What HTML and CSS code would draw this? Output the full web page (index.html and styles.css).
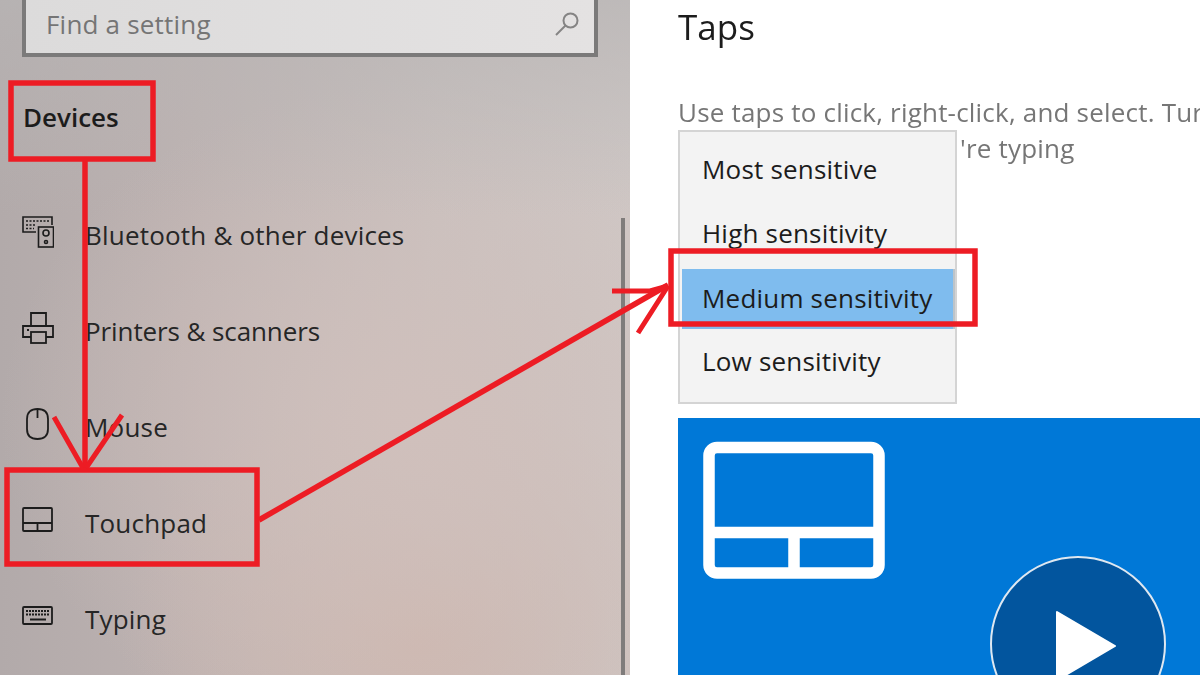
FILE: index.html
```html
<!DOCTYPE html>
<html lang="en">
<head>
  <meta charset="UTF-8">
  <meta name="viewport" content="width=device-width, initial-scale=1">
  <title>Settings - Touchpad</title>
  <link rel="stylesheet" href="styles.css">
</head>
<body>

  <div class="window">
    <aside class="sidebar">
      <div class="search">
        <span>Find a setting</span>
        <svg class="search-icon" width="24" height="24" viewBox="0 0 24 24" fill="none" stroke="#858484" stroke-width="2">
          <circle cx="15.5" cy="8.5" r="7"/>
          <path d="M10.5 13.5 L1 23"/>
        </svg>
      </div>

      <h3 class="group">Devices</h3>

      <nav class="nav">
        <a href="#">
          <svg width="32" height="32" viewBox="0 0 32 32" fill="none" stroke="#1c1c1c" stroke-width="1.6">
            <path d="M14 16 H1 V1 H30 V9"/>
            <rect x="16.5" y="11" width="15" height="20"/>
            <circle cx="24" cy="17" r="3"/>
            <circle cx="24" cy="26" r="1.5"/>
            <path d="M4 5 H27 M4 9 H13 M4 12.5 H12" stroke-dasharray="2 1.5"/>
          </svg>
          <span>Bluetooth &amp; other devices</span>
        </a>
        <a href="#">
          <svg width="32" height="32" viewBox="0 0 32 32" fill="none" stroke="#1c1c1c" stroke-width="1.8">
            <path d="M9 14 V1 H24 V14"/>
            <path d="M9 25 H1 V14 H31 V25 H24"/>
            <rect x="9" y="20" width="15" height="11"/>
            <path d="M5 18 H7"/>
          </svg>
          <span class="tight">Printers &amp; scanners</span>
        </a>
        <a href="#">
          <svg width="32" height="32" viewBox="0 0 32 32" fill="none" stroke="#1c1c1c" stroke-width="1.8">
            <path d="M5 11 C5 4 9 1 15.5 1 C22 1 26 4 26 11 V21 C26 28 22 31 15.5 31 C9 31 5 28 5 21 Z"/>
            <path d="M15.5 1 V10"/>
          </svg>
          <span>Mouse</span>
        </a>
        <a href="#">
          <svg width="32" height="32" viewBox="0 0 32 32" fill="none" stroke="#1c1c1c" stroke-width="1.8">
            <rect x="1" y="4" width="29" height="23" rx="1"/>
            <path d="M1 19 H30 M15.5 19 V27"/>
          </svg>
          <span>Touchpad</span>
        </a>
        <a href="#">
          <svg width="32" height="32" viewBox="0 0 32 32" fill="none" stroke="#1c1c1c" stroke-width="1.8">
            <rect x="1" y="7" width="29" height="17" rx="1"/>
            <path d="M4 11 H27 M4 14.5 H27" stroke-width="2" stroke-dasharray="2 1"/>
            <path d="M8 19.5 H24" stroke-width="2"/>
          </svg>
          <span>Typing</span>
        </a>
      </nav>

      <div class="scrollbar"></div>
    </aside>

    <main class="content">
      <h1>Taps</h1>
      <p class="desc">Use taps to click, right-click, and select. Turn</p>
      <p class="desc desc-second">'re typing</p>

      <ul class="flyout">
        <li>Most sensitive</li>
        <li>High sensitivity</li>
        <li class="selected">Medium sensitivity</li>
        <li>Low sensitivity</li>
      </ul>

      <div class="video">
        <svg class="pad" width="182" height="138" viewBox="0 0 182 138" fill="none" stroke="#fff" stroke-width="11.5">
          <rect x="6" y="6.5" width="170" height="125.5" rx="8"/>
          <path d="M6 91.5 H176 M91 91.5 V132"/>
        </svg>
        <div class="play">
          <svg width="62" height="70" viewBox="0 0 62 70"><path d="M2 1 L60 35 L2 69 Z" fill="#fff" stroke="#fff" stroke-width="2" stroke-linejoin="round"/></svg>
        </div>
      </div>
    </main>
  </div>

  <!-- red marks drawn over the screenshot -->
  <svg class="marks" width="1200" height="675" viewBox="0 0 1200 675" fill="none" stroke="#ed1c24" stroke-width="5.5">
    <rect x="11" y="83" width="142" height="76"/>
    <rect x="7" y="470" width="250" height="94"/>
    <rect x="671" y="251" width="304" height="73"/>
    <path d="M85 161 V470"/>
    <path d="M54 417 L83 468 M122 415 L86 468" stroke-width="5"/>
    <path d="M259 520 L668 285"/>
    <path d="M612 291 H650 L668 286 M638 333 L668 286" stroke-width="5"/>
  </svg>

</body>
</html>
```

FILE: styles.css
```css
html, body {
  margin: 0;
  height: 100%;
  overflow: hidden;
}
body {
  font-family: "Open Sans", "Noto Sans", sans-serif;
  background-color: #fff;
  color: #1c1c1c;
}
.window {
  display: flex;
  height: 675px;
  filter: blur(0.6px);
}

/* SIDEBAR */
.sidebar {
  width: 630px;
  flex-shrink: 0;
  position: relative;
  background:
    linear-gradient(180deg, rgba(184,181,181,0.75) 0%, rgba(184,181,181,0) 32%),
    radial-gradient(ellipse 420px 340px at 420px 420px, #d0c0bc 0%, rgba(208,192,188,0) 100%),
    radial-gradient(ellipse 300px 260px at 420px 640px, #cdb6ae 0%, rgba(205,182,174,0) 100%),
    linear-gradient(90deg, #b2aaaa 0%, #bdb2b1 30%, #c9c1bf 70%, #cfc8c6 100%);
}
.search {
  width: 533px;
  height: 58px;
  margin: -9px 0 0 22px;
  border: 4px solid #7b7a7a;
  background: linear-gradient(90deg, #dcdbdb, #e4e2e2);
  display: flex;
  align-items: center;
  justify-content: space-between;
  padding: 0 15px 0 20px;
  font-size: 26px;
  letter-spacing: 0.2px;
  color: #757575;
}
.group {
  margin: 38px 0 0 23px;
  height: 44px;
  line-height: 44px;
  font-size: 26px;
  font-weight: 600;
}
.nav {
  margin-top: 48px;
}
.nav a {
  display: flex;
  align-items: center;
  height: 96px;
  padding-left: 22px;
  gap: 31px;
  color: #262626;
  text-decoration: none;
  font-size: 26px;
  letter-spacing: 0.2px;
}
.nav .tight {
  letter-spacing: -0.1px;
}
.nav svg {
  margin-bottom: 6px;
}
.scrollbar {
  position: absolute;
  top: 218px;
  bottom: 0;
  right: 5px;
  width: 4px;
  background-color: #7f7c7b;
}

/* CONTENT */
.content {
  flex: 1;
  min-width: 0;
  position: relative;
  padding-left: 48px;
  display: flex;
  flex-direction: column;
}
.content h1 {
  margin: 2px 0 0;
  font-size: 35px;
  line-height: 50px;
  font-weight: 400;
  color: #1c1c1c;
}
.desc {
  margin: 0;
  font-size: 26px;
  letter-spacing: 0.2px;
  line-height: 36px;
  color: #767676;
  white-space: nowrap;
}
.content h1 + .desc {
  margin-top: 42px;
}
.desc-second {
  padding-left: 282px;
}
.flyout {
  position: absolute;
  z-index: 1;
  left: 48px;
  top: 130px;
  width: 275px;
  height: 264px;
  margin: 0;
  padding: 6px 0 0;
  list-style: none;
  border: 2px solid #d4d4d4;
  background-color: #f3f3f3;
}
.flyout li {
  height: 64px;
  line-height: 63px;
  padding-left: 22px;
  font-size: 26px;
  letter-spacing: 0.2px;
  color: #1c1c1c;
}
.flyout .selected {
  height: 60px;
  line-height: 59px;
  margin: 3px 0 1px 2px;
  padding-left: 20px;
  background-color: #7fbcee;
  border-right: 2px solid #bcc3c8;
}
.video {
  position: relative;
  flex: 1;
  margin-top: 252px;
  background-color: #0078d7;
  overflow: hidden;
}
.pad {
  display: block;
  margin: 23px 0 0 25px;
}
.play {
  position: absolute;
  left: 312px;
  top: 138px;
  width: 172px;
  height: 172px;
  border: 2px solid #dfe8f1;
  border-radius: 50%;
  background-color: #02559e;
}
.play svg {
  position: absolute;
  left: 63px;
  top: 53px;
}

/* MARKS */
.marks {
  position: absolute;
  z-index: 2;
  left: 0;
  top: 0;
  filter: blur(0.4px);
}
```
